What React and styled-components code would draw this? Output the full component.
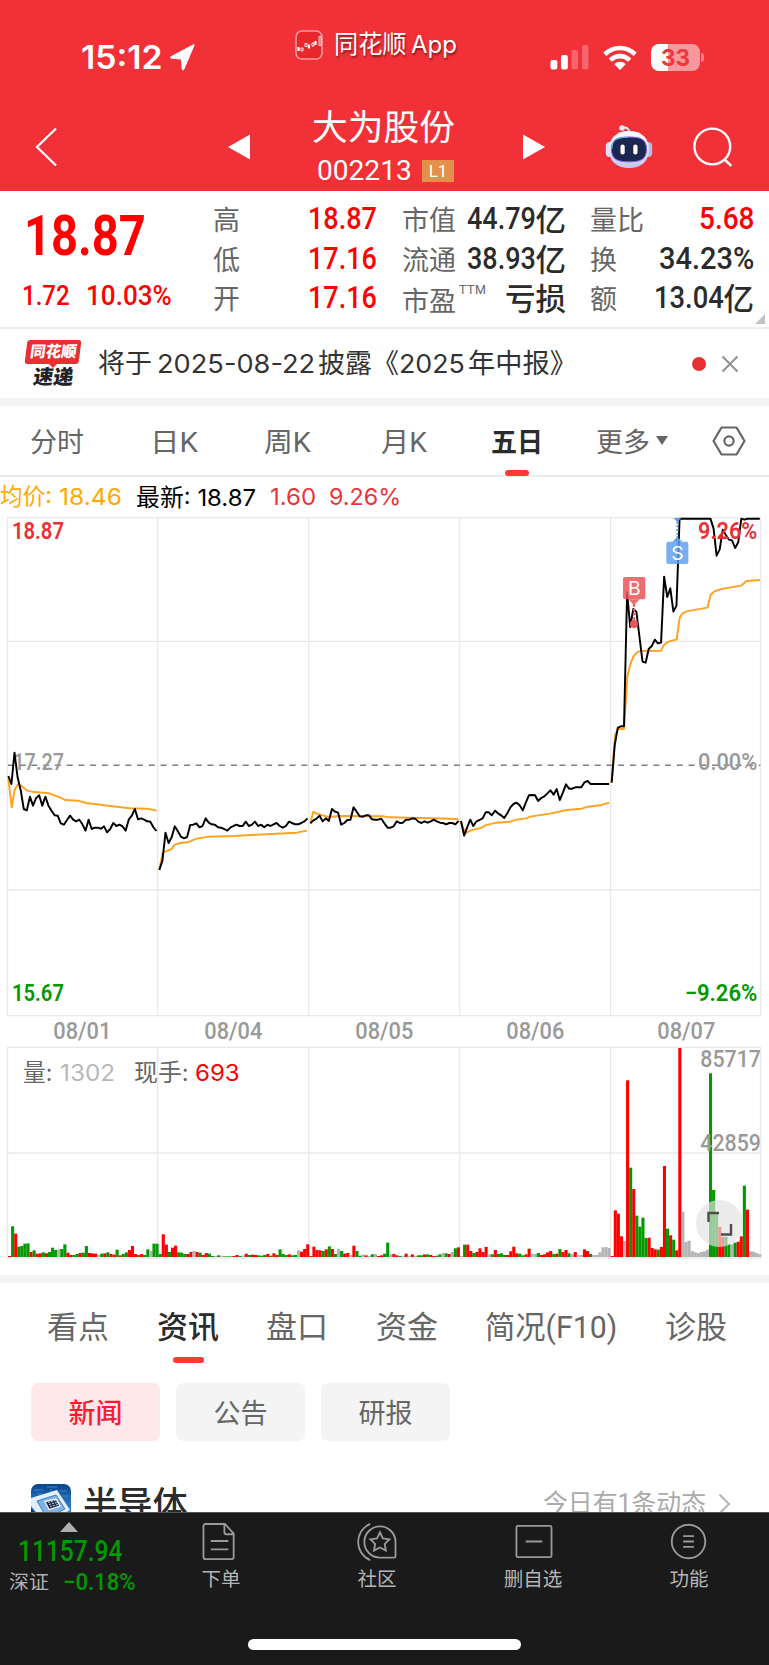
import { useLayoutEffect, useRef } from "react";
import styled, { createGlobalStyle } from "styled-components";

const GlobalStyle = createGlobalStyle`
  :root {
    --brand: #f23037;
    --up: #ff0000;
    --down: #009900;
    --text: #2b2b2b;
    --muted: #666;
    --line: #ececec;
    --strip: #f4f4f4;
  }

  * {
    box-sizing: border-box;
  }

  body {
    margin: 0;
    background: #fff;
    color: var(--text);
    font-family: Roboto, "Noto Sans CJK SC", sans-serif;
  }
`;

/* ---------- text fitted to a fixed width ---------- */

const StyledFit = styled.span`
  display: block;
  flex: none;
  width: ${({ $w }) => $w}px;
  margin-left: ${({ $ml }) => $ml || 0}px;
  font-size: ${({ $size }) => $size}px;
  font-weight: ${({ $weight }) => $weight || 400};
  font-family: ${({ $inter }) => ($inter ? 'Inter, "Noto Sans CJK SC", sans-serif' : "inherit")};
  color: ${({ $color }) => $color || "inherit"};
  white-space: pre;

  span {
    display: inline-block;
    transform-origin: left center;
  }
`;

function Fit({ w, ml, size, weight, color, inter, children }) {
  const ref = useRef(null);

  useLayoutEffect(() => {
    const el = ref.current;
    el.style.transform = `scaleX(${w / el.offsetWidth})`;
  }, [w]);

  return (
    <StyledFit $w={w} $ml={ml} $size={size} $weight={weight} $color={color} $inter={inter}>
      <span ref={ref}>{children}</span>
    </StyledFit>
  );
}

const Screen = styled.div`
  position: relative;
  width: 769px;
  height: 1665px;
  overflow: hidden;
  display: flex;
  flex-direction: column;
  background: #fff;
`;

const Strip = styled.div`
  flex: none;
  height: 8px;
  background: var(--strip);
`;

const Indicator = styled.i`
  position: absolute;
  left: 50%;
  bottom: ${({ $bottom }) => $bottom}px;
  width: ${({ $w }) => $w}px;
  height: 6px;
  margin-left: ${({ $w }) => -$w / 2}px;
  border-radius: 3px;
  background: #ff3b30;
`;

/* ---------- header ---------- */

const StyledHeader = styled.header`
  flex: none;
  height: 191px;
  background: var(--brand);
  color: #fff;
`;

const StatusBar = styled.div`
  height: 95px;
  padding: 20px 65px 0 81px;
  display: flex;
  align-items: center;
  line-height: 40px;

  > svg {
    flex: none;
  }
`;

const AppTag = styled.div`
  display: flex;
  align-items: center;
  margin: 0 93px 25px 99px;
  text-shadow: 1px 2px 2px rgba(0, 0, 0, 0.45);
`;

const Battery = styled.div`
  position: relative;
  width: 49px;
  height: 27px;
  margin-left: 14px;
  border-radius: 8px;
  background: linear-gradient(90deg, #fff 34%, #f9989c 34%);
  color: #f2363e;
  font: 700 22.5px/27px Inter, sans-serif;
  text-align: center;

  &::after {
    content: "";
    position: absolute;
    right: -4px;
    top: 9px;
    width: 3px;
    height: 9px;
    border-radius: 0 3px 3px 0;
    background: #f9868b;
  }
`;

const TitleBar = styled.div`
  height: 96px;
  display: flex;
  align-items: center;
  padding: 7px 34px 0 35px;

  > svg {
    flex: none;
  }
`;

const StockTitle = styled.div`
  width: 145px;
  height: 89px;
  margin: 0 66px 0 62px;
  padding-top: 8px;
  line-height: 36px;
`;

const StockCode = styled.div`
  display: flex;
  align-items: center;
  margin-top: 10px;
  padding-left: 5px;
  line-height: 30px;
`;

const Level = styled.b`
  width: 32px;
  height: 22px;
  margin-left: 10px;
  background: #e3914a;
  font-size: 17px;
  font-weight: 400;
  line-height: 22px;
  text-align: center;
`;

function Header() {
  return (
    <StyledHeader>
      <StatusBar>
        <Fit w={82} size={32.5} weight={600} inter>
          15:12
        </Fit>
        <svg width="26" height="27" viewBox="0 0 26 27" style={{ marginLeft: 7 }}>
          <path d="M24.4 1.8c.6-1.2-.3-1.9-1.400-1.300L1.100 12.200c-1.400.8-1.200 2.500.5 2.600l9.300.6 .8 9.600c.1 1.600 1.800 1.800 2.500.4z" fill="#fff" />
        </svg>
        <AppTag>
          <svg width="28" height="30" viewBox="0 0 28 30">
            <rect x="1" y="1" width="26" height="28" rx="6" fill="#e8262c" stroke="#f99a9d" strokeWidth="1.6" />
            <path d="M3.500 17v4M14 14.500v4M20.500 11v4" stroke="#fff" strokeWidth="2.200" />
            <path d="M6 18h2v3H6zM10 13.500h2v3h-2zM17 13h2v3h-2zM24 6.500h2v9h-2z" fill="none" stroke="#fff" strokeWidth=".9" />
          </svg>
          <Fit w={73} ml={11} size={24.5}>
            同花顺
          </Fit>
          <Fit w={46} ml={4} size={24} inter>
            App
          </Fit>
        </AppTag>
        <svg width="40" height="25" viewBox="0 0 40 25">
          <rect x="0.500" y="15" width="6.800" height="9.500" rx="2" fill="#fff" />
          <rect x="11" y="10" width="6.800" height="14.500" rx="2" fill="#fff" />
          <rect x="21.500" y="5" width="6.500" height="19.500" rx="2" fill="#f6656b" />
          <rect x="32" y="0" width="6.500" height="24.500" rx="2" fill="#f6656b" />
        </svg>
        <svg width="34" height="25" viewBox="0 0 34 25" style={{ marginLeft: 13 }}>
          <g fill="none" stroke="#fff" strokeWidth="4.600">
            <path d="M1.800 9.300C10.500.8 23.500.8 32.200 9.300" />
            <path d="M7.300 15.200C12.900 9.700 21.100 9.700 26.700 15.200" />
          </g>
          <path d="M11.300 19.200c3.300-3.200 8.100-3.200 11.400 0L17 25z" fill="#fff" />
        </svg>
        <Battery>33</Battery>
      </StatusBar>
      <TitleBar>
        <svg width="22" height="40" viewBox="0 0 22 40">
          <path d="M21 1.500 2 20l19 18.500" fill="none" stroke="#fff" strokeWidth="2.300" />
        </svg>
        <svg width="22" height="26" viewBox="0 0 22 26" style={{ marginLeft: 171 }}>
          <path d="M0 13 22 .5v25z" fill="#fff" />
        </svg>
        <StockTitle>
          <Fit w={143} size={35.5}>
            大为股份
          </Fit>
          <StockCode>
            <Fit w={95} size={27.5}>
              002213
            </Fit>
            <Level>L1</Level>
          </StockCode>
        </StockTitle>
        <svg width="22" height="26" viewBox="0 0 22 26">
          <path d="M22 13 0 .5v25z" fill="#fff" />
        </svg>
        <svg width="48" height="46" viewBox="0 0 48 46" style={{ marginLeft: 60 }}>
          <defs>
            <linearGradient id="shell" x1="0" y1="0" x2="0" y2="1">
              <stop offset="0" stopColor="#fff" />
              <stop offset="1" stopColor="#c3c6ec" />
            </linearGradient>
          </defs>
          <path d="M17 4c4-1.500 7 .5 7.300 4" fill="none" stroke="#e9e9fb" strokeWidth="2" />
          <circle cx="17" cy="4" r="2.800" fill="#e4e5fa" />
          <rect x=".8" y="18" width="8" height="15" rx="4" fill="#dfe1f8" />
          <rect x="39.200" y="18" width="8" height="15" rx="4" fill="#b9bbe6" />
          <path d="M24 7c13 0 20 7.500 20 18.500S37 44 24 44 4 36.500 4 25.500 11 7 24 7z" fill="url(#shell)" />
          <path d="M24 13c12 0 17.500 2.500 17.500 12.300S36 37.800 24 37.800 6.500 35 6.500 25.300 12 13 24 13z" fill="#1a2850" stroke="#7f5cf0" strokeWidth="1" />
          <path d="M7 24.500c0-9 5-11 16-11.200" fill="none" stroke="#48c3ef" strokeWidth="1" />
          <rect x="15.500" y="20.500" width="4.200" height="10" rx="2" fill="#fff" />
          <rect x="28.300" y="20.500" width="4.200" height="10" rx="2" fill="#fff" />
        </svg>
        <svg width="40" height="40" viewBox="0 0 40 40" style={{ marginLeft: 40 }}>
          <g fill="none" stroke="#fff" strokeWidth="2.400">
            <circle cx="19.300" cy="19.500" r="17.900" />
            <path d="m31.500 32.500 6.800 6.300" />
          </g>
        </svg>
      </TitleBar>
    </StyledHeader>
  );
}

/* ---------- quote ---------- */

const StyledQuote = styled.section`
  position: relative;
  flex: none;
  height: 138px;
  padding: 7px 0 0 22px;
  display: flex;
  border-bottom: 2px solid var(--line);
`;

const QuotePrice = styled.div`
  width: 191px;
  color: var(--up);

  > :first-child {
    height: 77px;
    line-height: 77px;
  }
`;

const QuoteChange = styled.div`
  display: flex;
  line-height: 42px;
`;

const QuoteColumn = styled.div`
  width: ${({ $w }) => $w}px;
  margin-right: ${({ $mr }) => $mr || 0}px;
`;

const QuoteRow = styled.div`
  display: flex;
  justify-content: space-between;
  height: 39.5px;
  line-height: 42px;
  color: ${({ $up }) => ($up ? "var(--up)" : "var(--text)")};
`;

const QuoteLabel = styled.span`
  color: var(--muted);
  font-size: 27px;
  white-space: nowrap;
  line-height: ${({ $low }) => ($low ? "51px" : "46px")};

  sup {
    display: inline-block;
    margin-left: 3px;
    font-size: 12.5px;
    letter-spacing: 0.5px;
    line-height: 1;
    vertical-align: 17px;
  }
`;

const QuoteValue = styled.span`
  display: flex;
  font-size: 30.5px;
  font-weight: 500;
`;

const QuoteUnit = styled.span`
  line-height: 45px;
`;

const Corner = styled.i`
  position: absolute;
  right: 4px;
  bottom: 3px;
  border: solid transparent;
  border-width: 0 0 10px 10px;
  border-bottom-color: #c4c4c4;
`;

const quotes = [
  { w: 164, mr: 25, rows: [["高", "18.87", 69, "", true], ["低", "17.16", 69, "", true], ["开", "17.16", 69, "", true]] },
  { w: 164, mr: 24, rows: [["市值", "44.79", 69, "亿"], ["流通", "38.93", 69, "亿"], ["市盈", "", 0, "亏损", false, "TTM"]] },
  { w: 164, rows: [["量比", "5.68", 55, "", true], ["换", "34.23%", 95, ""], ["额", "13.04", 70, "亿"]] },
];

function Quote() {
  return (
    <StyledQuote>
      <QuotePrice>
        <Fit w={122} ml={2} size={56} weight={700}>
          18.87
        </Fit>
        <QuoteChange>
          <Fit w={48} size={28.5} weight={500}>
            1.72
          </Fit>
          <Fit w={86} ml={16} size={28.5} weight={500}>
            10.03%
          </Fit>
        </QuoteChange>
      </QuotePrice>
      {quotes.map((col, i) => (
        <QuoteColumn key={i} $w={col.w} $mr={col.mr}>
          {col.rows.map(([label, value, w, unit, up, sup]) => (
            <QuoteRow key={label} $up={up}>
              <QuoteLabel $low={sup}>
                {label}
                {sup && <sup>{sup}</sup>}
              </QuoteLabel>
              <QuoteValue>
                {value && (
                  <Fit w={w} size={30.5} weight={500}>
                    {value}
                  </Fit>
                )}
                {unit && <QuoteUnit>{unit}</QuoteUnit>}
              </QuoteValue>
            </QuoteRow>
          ))}
        </QuoteColumn>
      ))}
      <Corner />
    </StyledQuote>
  );
}

/* ---------- news ticker ---------- */

const StyledTicker = styled.section`
  flex: none;
  height: 69px;
  padding-left: 25px;
  display: flex;
  align-items: center;
  line-height: 40px;
  color: #333;
`;

const TickerLogo = styled.div`
  position: relative;
  width: 57px;
  height: 47px;
  margin-right: 16px;
  text-align: center;
  font-weight: 900;
  color: #222;

  &::before {
    content: "";
    position: absolute;
    left: 1px;
    top: 0;
    width: 54px;
    height: 24px;
    border-radius: 3px;
    background: #ea2f31;
    transform: skewX(-7deg);
  }

  &::after {
    content: "";
    position: absolute;
    left: 23px;
    top: 23px;
    border: 5px solid transparent;
    border-top-color: #ea2f31;
    border-bottom: 0;
  }

  b,
  em {
    position: relative;
    display: block;
    transform: skewX(-8deg);
    font-style: normal;
  }

  b {
    color: #fff;
    font-size: 15.5px;
    line-height: 25px;
  }

  em {
    font-size: 20px;
    line-height: 24px;
  }
`;

const Dot = styled.i`
  width: 14px;
  height: 14px;
  margin-left: 115px;
  border-radius: 50%;
  background: #e93030;
`;

function Ticker() {
  return (
    <StyledTicker>
      <TickerLogo>
        <b>同花顺</b>
        <em>速递</em>
      </TickerLogo>
      <Fit w={54} size={27}>
        将于
      </Fit>
      <Fit w={158} ml={5} size={26} inter>
        2025-08-22
      </Fit>
      <Fit w={81} ml={3} size={27}>
        披露《
      </Fit>
      <Fit w={66} size={26} inter>
        2025
      </Fit>
      <Fit w={109} ml={3} size={27}>
        年中报》
      </Fit>
      <Dot />
      <svg width="18" height="18" viewBox="0 0 18 18" style={{ marginLeft: 15 }}>
        <path d="M1.500 1.500l15 15M16.500 1.500l-15 15" stroke="#959595" strokeWidth="2.200" />
      </svg>
    </StyledTicker>
  );
}

/* ---------- period tabs ---------- */

const StyledPeriods = styled.nav`
  flex: none;
  height: 71px;
  padding-left: 30px;
  display: flex;
  align-items: center;
  border-bottom: 2px solid var(--line);
  line-height: 64px;
  color: var(--muted);

  > svg {
    flex: none;
  }
`;

const Period = styled.div`
  position: relative;
  margin-left: ${({ $ml }) => $ml || 0}px;
  padding-top: ${({ $drop }) => $drop || 0}px;
  color: ${({ $active }) => ($active ? "var(--text)" : "inherit")};
`;

const periods = [
  ["分时", 54, 0],
  ["日K", 48, 66],
  ["周K", 47, 66],
  ["月K", 46, 70],
  ["五日", 52, 64],
  ["更多", 54, 53],
];

function Periods() {
  return (
    <StyledPeriods>
      {periods.map(([name, w, ml]) => (
        <Period key={name} $ml={ml} $drop={5} $active={name === "五日"}>
          <Fit w={w} size={27} weight={name === "五日" ? 700 : 400}>
            {name}
          </Fit>
          {name === "五日" && <Indicator $w={24} $bottom={-1} />}
        </Period>
      ))}
      <svg width="12" height="9" viewBox="0 0 12 9" style={{ marginLeft: 6 }}>
        <path d="M0 0h12L6 9z" fill="#666" />
      </svg>
      <svg width="34" height="30" viewBox="0 0 34 30" style={{ marginLeft: 44 }}>
        <g fill="none" stroke="#666" strokeWidth="2.200">
          <path d="M9.500 1.500h15L32.500 15l-8 13.500h-15L1.500 15z" strokeLinejoin="round" />
          <circle cx="17" cy="15" r="4.600" />
        </g>
      </svg>
    </StyledPeriods>
  );
}

const Legend = styled.div`
  flex: none;
  height: 40px;
  display: flex;
  line-height: 41px;
`;

/* ---------- chart, drawn in a 3x coordinate space ---------- */

const STEP = 9.26;
const MID = 745;
const FLOOR = 2220;

const days = [
  {
    start: 25,
    price: [168, 192, 98, 172, 210, 267, 271, 230, 257, 234, 226, 257, 230, 257, 272, 286, 287, 310, 314, 300, 287, 299, 304, 299, 313, 332, 299, 327, 323, 323, 326, 319, 337, 327, 309, 318, 314, 319, 332, 299, 287, 267, 298, 295, 299, 304, 305, 322, 333],
    avg: "25,175 35,262 44,210 54,193 62,196 80,211 95,215 130,218 147,220 180,232 195,240 235,242 258,249 330,258 390,265 440,266 470,272",
  },
  {
    start: 478,
    price: [450, 422, 338, 369, 352, 319, 334, 350, 355, 351, 315, 314, 310, 322, 318, 295, 308, 313, 314, 322, 323, 327, 332, 323, 318, 314, 318, 318, 305, 318, 314, 305, 318, 314, 322, 314, 318, 313, 309, 318, 323, 318, 305, 309, 313, 313, 309, 304, 295],
    avg: "478,448 488,398 497,394 515,387 524,374 540,369 563,367 575,362 590,356 610,353 625,350 700,348 830,341 890,338 921,332",
  },
  {
    start: 931,
    price: [310, 301, 296, 287, 304, 295, 303, 267, 275, 278, 314, 309, 300, 299, 262, 275, 289, 290, 286, 286, 298, 299, 299, 296, 310, 323, 323, 319, 304, 309, 308, 299, 299, 295, 296, 305, 309, 304, 308, 304, 299, 304, 308, 309, 313, 309, 309, 313, 303],
    avg: "931,308 940,275 950,281 985,291 1023,288 1150,289 1170,292 1375,297",
  },
  {
    start: 1383,
    price: [303, 347, 322, 299, 318, 304, 300, 295, 277, 277, 286, 272, 280, 286, 294, 280, 262, 252, 248, 256, 271, 248, 226, 225, 226, 243, 234, 229, 220, 211, 224, 207, 240, 218, 193, 206, 206, 202, 202, 202, 187, 183, 192, 192, 192, 192, 192, 192, 192],
    avg: "1382,303 1396,340 1410,332 1446,323 1455,316 1490,308 1530,305 1550,299 1580,295 1590,290 1650,281 1700,270 1745,266 1765,260 1800,256 1828,248",
  },
  {
    start: 1835,
    price: [188, 75, 23, 19, 19, -383, -279, -333, -325, -250, -175, -172, -213, -222, -241, -230, -232, -430, -369, -395, -325, -343, -604, -604, -604, -604, -604, -604, -604, -604, -604, -604, -604, -575, -493, -512, -571, -555, -541, -539, -516, -533, -604, -601, -604, -604, -604, -604, -604],
    avg: "1835,188 1845,45 1854,27 1872,27 1882,-130 1891,-167 1900,-190 1910,-202 1920,-207 1983,-208 1992,-225 2002,-233 2015,-238 2030,-241 2039,-307 2048,-320 2060,-326 2122,-337 2132,-375 2142,-385 2155,-390 2170,-394 2223,-403 2240,-417 2280,-420",
  },
];

// r = up, g = down, x = flat
const volumes = [
  "r3 g92 r70 g31 g33 g40 g41 r15 g20 r10 r11 g14 r11 g15 g28 g21 x23 g24 g38 r13 r6 g6 g9 r12 g13 g33 r12 r11 r10 x6 g10 r11 g14 r9 r7 g22 r5 g9 g14 r21 r33 r9 g6 r9 g6 g23 x18 g40 g40",
  "g9 r68 r37 g15 r28 r34 g14 g13 g9 r9 r15 x18 r15 g13 r6 r12 g10 g3 x3 g5 x4 g2 g2 g2 r3 r6 g3 x5 r10 g6 r7 r6 g5 g4 g6 r9 g4 r11 r6 g23 g9 g6 r8 g5 g6 x20 r16 r24 r38",
  "g3 r31 r21 r20 g18 r23 g32 r24 g9 x24 g18 r10 r12 x6 r34 g18 g4 x8 r5 x3 g8 x9 r3 r5 g10 g43 x8 r9 r5 g3 x4 r10 x3 r8 x4 g5 g5 r8 g8 r6 r3 g4 g8 x12 g11 r9 x15 g26 r29",
  "x3 g37 r37 r18 g12 r15 r26 r15 r30 x8 g8 r21 g9 g11 g6 r6 r17 r31 r11 g10 g5 r8 r25 x10 x9 g12 r6 r8 r14 r18 g9 r10 g24 r15 r21 g11 x8 r15 x6 x6 r23 r18 g9 x6 x6 x14 x29 x30 x27",
  "r3 r140 r130 r62 x48 r530 g268 r204 g124 g91 g118 g57 r58 r27 r23 g22 r30 r273 g85 r65 g52 r20 r627 x136 x45 x49 x18 x14 x12 x15 x17 x22 g551 g201 g130 r90 r60 g60 g38 x38 g43 r46 r62 g214 r142 x17 x16 x12 x8",
];

const barColors = { r: "#ff0000", g: "#009900", x: "#b4b4b4" };

const Label = styled.text`
  font-family: Roboto, sans-serif;
  font-size: 70px;
  font-weight: ${({ $weight }) => $weight || 500};
`;

const StyledChart = styled.section`
  position: relative;
  flex: none;
  height: 758px;

  svg {
    display: block;
  }
`;

const VolumeLegend = styled.div`
  position: absolute;
  left: 23px;
  top: 536px;
  display: flex;
  line-height: 40px;
  color: #666;
`;

const Fullscreen = styled.div`
  position: absolute;
  left: 696px;
  top: 683px;
  width: 47px;
  height: 47px;
  border-radius: 50%;
  background: rgba(227, 227, 227, 0.68);
`;

function AxisLabel({ x, y, w, color, weight, children }) {
  return (
    <Label x={x} y={y} textLength={w} lengthAdjust="spacingAndGlyphs" fill={color} $weight={weight}>
      {children}
    </Label>
  );
}

function Chart() {
  const columns = [473, 926, 1379, 1832];

  return (
    <StyledChart>
      <svg width="769" height="742" viewBox="0 0 2307 2226">
        <g fill="none" stroke="#e9e9e9" strokeWidth="4">
          <rect x="22.500" y="2" width="2259" height="1494" />
          <rect x="22.500" y="1591" width="2259" height="632" />
          <path d="M22 373H2281M22 1119H2281M22 1908H2281" />
          {columns.map((x) => (
            <path key={x} d={`M${x} 2V1496M${x} 1591V2222`} />
          ))}
        </g>
        <path d={`M24 ${MID}H2281`} stroke="#808080" strokeWidth="4.500" strokeDasharray="18 17.200" />

        {volumes.map((day, d) =>
          day.split(" ").map((bar, i) => {
            const h = Number(bar.slice(1));
            return (
              <rect
                key={`${d}-${i}`}
                x={24 + d * 452 + i * 9.22}
                y={FLOOR - h}
                width="9.3"
                height={h}
                fill={barColors[bar[0]]}
              />
            );
          })
        )}

        <AxisLabel x={40} y={760} w={152} color="#999">17.27</AxisLabel>
        <AxisLabel x={2094} y={760} w={178} color="#999">0.00%</AxisLabel>

        <g transform="translate(0 609)" fill="none" strokeWidth="5.800" strokeLinejoin="round">
          {days.map((day) => (
            <g key={day.start}>
              <polyline points={day.avg} stroke="#ffa21f" />
              <polyline
                points={day.price.map((y, i) => `${day.start + i * STEP},${y}`).join(" ")}
                stroke="#000"
              />
            </g>
          ))}
        </g>

        <AxisLabel x={36} y={67} w={156} color="#eb2f36" weight={600}>18.87</AxisLabel>
        <AxisLabel x={2094} y={67} w={178} color="#eb2f36" weight={600}>9.26%</AxisLabel>
        <AxisLabel x={36} y={1453} w={156} color="#009900" weight={600}>15.67</AxisLabel>
        <AxisLabel x={2054} y={1453} w={218} color="#009900" weight={600}>−9.26%</AxisLabel>
        {["01", "04", "05", "06", "07"].map((d, i) => (
          <AxisLabel key={d} x={160 + i * 453} y={1565} w={174} color="#999">{`08/${d}`}</AxisLabel>
        ))}
        <AxisLabel x={2101} y={1650} w={182} color="#999">85717</AxisLabel>
        <AxisLabel x={2101} y={1903} w={182} color="#999">42859</AxisLabel>

        <g fill="#ea545a">
          <rect x="1869" y="180" width="67" height="67" rx="6" opacity=".85" />
          <circle cx="1902" cy="321" r="12" />
          <path d="M1885 247h34l-17 18z" opacity=".85" />
          <path d="M1902 262v52" stroke="#ea545a" strokeWidth="7" strokeDasharray="7 6" />
        </g>
        <g fill="#5a9cf0">
          <rect x="1999" y="74" width="66" height="67" rx="6" opacity=".82" />
          <path d="M2020 3h24l-12 12zM2017 74l15-14 15 14z" />
          <path d="M2032 14v48" stroke="#5a9cf0" strokeWidth="6" strokeDasharray="6 5" />
        </g>
        <g fill="#fff" fontFamily="Inter, sans-serif" fontSize="58" textAnchor="middle">
          <text x="1903" y="234">B</text>
          <text x="2032" y="129">S</text>
        </g>
      </svg>
      <VolumeLegend>
        <Fit w={29} size={23.5} inter>
          量:
        </Fit>
        <Fit w={55} ml={8} size={23} color="#b8b8b8" inter>
          1302
        </Fit>
        <Fit w={55} ml={19} size={23.5} inter>
          现手:
        </Fit>
        <Fit w={45} ml={6} size={23} color="var(--up)" inter>
          693
        </Fit>
      </VolumeLegend>
      <Fullscreen>
        <svg width="47" height="47" viewBox="0 0 47 47">
          <path d="M12.500 22V13H23M25 34.500h10V24" fill="none" stroke="#4d4d4d" strokeWidth="2.400" />
        </svg>
      </Fullscreen>
    </StyledChart>
  );
}

/* ---------- information ---------- */

const StyledTopics = styled.nav`
  flex: none;
  height: 88px;
  padding-left: 47px;
  display: flex;
  line-height: 88px;
  color: #666;
`;

const Chips = styled.div`
  flex: none;
  display: flex;
  gap: 16px;
  padding: 12px 31px 0;
`;

const Chip = styled.div`
  width: 129px;
  height: 58px;
  border-radius: 7px;
  background: ${({ $active }) => ($active ? "#ffe8ea" : "#f4f4f4")};
  color: ${({ $active }) => ($active ? "#ff1a33" : "#666")};
  font-size: 27px;
  font-weight: ${({ $active }) => ($active ? 500 : 400)};
  line-height: 62px;
  text-align: center;
`;

const Sector = styled.div`
  flex: none;
  height: 40px;
  margin-top: 43px;
  padding: 0 37px 0 31px;
  display: flex;
  align-items: center;
  line-height: 40px;

  > svg {
    flex: none;
  }
`;

const topics = [
  ["看点", 62, 0],
  ["资讯", 62, 48],
  ["盘口", 62, 47],
  ["资金", 62, 48],
  ["简况(F10)", 132, 47],
  ["诊股", 62, 48],
];

function Info() {
  return (
    <>
      <StyledTopics>
        {topics.map(([name, w, ml]) => (
          <Period key={name} $ml={ml} $drop={1} $active={name === "资讯"}>
            <Fit w={w} size={31} weight={name === "资讯" ? 500 : 400}>
              {name}
            </Fit>
            {name === "资讯" && <Indicator $w={31} $bottom={8} />}
          </Period>
        ))}
      </StyledTopics>
      <Chips>
        <Chip $active>新闻</Chip>
        <Chip>公告</Chip>
        <Chip>研报</Chip>
      </Chips>
      <Sector>
        <svg width="40" height="40" viewBox="0 0 40 40">
          <defs>
            <linearGradient id="board" x1="0" y1="0" x2="0" y2="1">
              <stop offset="0" stopColor="#0d4389" />
              <stop offset=".6" stopColor="#2f80d0" />
            </linearGradient>
          </defs>
          <rect width="40" height="40" rx="7" fill="url(#board)" />
          <path d="M3 6h9M16 3h10M28 7h8M31 12h7M20 5v4M6 10h6" stroke="#3d86cf" />
          <path d="M0 14 26 6l13 20-24 14L0 22z" fill="#e3f0fc" />
          <path d="M6 17l19-6 9 14-18 9z" fill="#7fb2e6" stroke="#3d7cc4" />
          <path d="M14 17.500l11-2.500 4 7-11 3.500z" fill="#1b2740" stroke="#f2f8ff" strokeWidth="1.300" />
          <path d="M17 18.500l8-2M18 20.500l8-2M19 22.500l8-2" stroke="#c5d3e5" strokeDasharray="2 1" />
          <path d="M0 24l14 16H7a7 7 0 0 1-7-7z" fill="#0d3470" />
        </svg>
        <Fit w={105} ml={12} size={34.5} weight={500}>
          半导体
        </Fit>
        <Fit w={163} ml={355} size={25} color="#aaa">
          今日有1条动态
        </Fit>
        <svg width="13" height="22" viewBox="0 0 13 22" style={{ marginLeft: 12 }}>
          <path d="M1.500 1.500 11 11l-9.500 9.500" fill="none" stroke="#b5b5b5" strokeWidth="2" />
        </svg>
      </Sector>
    </>
  );
}

/* ---------- bottom bar ---------- */

const StyledBottomBar = styled.footer`
  position: absolute;
  left: 0;
  bottom: 0;
  width: 100%;
  height: 153px;
  display: flex;
  background: #1a1a1a;
  border-top: 1px solid #555;
  color: #b5b5b5;
`;

const MarketIndex = styled.div`
  width: 143px;
  padding: 9px 0 0 9px;
  color: var(--down);

  > svg {
    display: block;
    margin-left: 51px;
  }

  > span {
    margin-left: 9px;
    line-height: 39px;
  }

  > div {
    display: flex;
    line-height: 22px;
    margin-top: 1px;
  }
`;

const Action = styled.div`
  width: 156px;
  padding-top: 10px;
  display: flex;
  flex-direction: column;
  align-items: center;
  font-size: 19.5px;
  line-height: 20px;

  svg {
    margin-bottom: 9px;
    fill: none;
    stroke: #999;
    stroke-width: 1.9;
  }
`;

const HomeBar = styled.i`
  position: absolute;
  left: 248px;
  bottom: 15px;
  width: 273px;
  height: 11px;
  border-radius: 6px;
  background: #fff;
`;

const actions = [
  ["下单", <path key="p" d="M3.500 1h20l9 10v24a2 2 0 0 1-2 2h-27a2 2 0 0 1-2-2V3a2 2 0 0 1 2-2zM23 1v8.500a2 2 0 0 0 2 2h7.500M9 18.500h18M9 27h18" />],
  ["社区", <path key="p" d="M12.500 1C-4 8-4 31 12.500 38M22.500 3.500A16 16 0 0 0 22.500 35.500H37a1.500 1.500 0 0 0 1.500-1.500V19.500A16 16 0 0 0 22.500 3.500zM22.500 9.500l3 6.200 6.800 1-4.900 4.800 1.200 6.800-6.100-3.200-6.100 3.200 1.200-6.800-4.900-4.800 6.800-1z" />],
  ["删自选", <path key="p" d="M4 3h33a1.500 1.500 0 0 1 1.500 1.500v29A1.500 1.500 0 0 1 37 35H4a1.500 1.500 0 0 1-1.500-1.500v-29A1.500 1.500 0 0 1 4 3zM12 19h17" />],
  ["功能", <path key="p" d="M19 1.800a17.200 17.200 0 1 0 0 34.400a17.200 17.200 0 1 0 0-34.400zM13.500 13.500h11M13.500 19h11M13.500 24.500h11" />],
];

function BottomBar() {
  return (
    <StyledBottomBar>
      <MarketIndex>
        <svg width="18" height="10" viewBox="0 0 18 10">
          <path d="M9 0l9 10H0z" fill="#b0b0b0" />
        </svg>
        <Fit w={104} ml={9} size={29} weight={500}>
          11157.94
        </Fit>
        <div>
          <Fit w={40} size={19.5} color="#b0b0b0">
            深证
          </Fit>
          <Fit w={72} ml={14} size={23} weight={500}>
            −0.18%
          </Fit>
        </div>
      </MarketIndex>
      {actions.map(([name, icon]) => (
        <Action key={name}>
          <svg width="40" height="38" viewBox="-1 0 41 39">
            {icon}
          </svg>
          {name}
        </Action>
      ))}
      <HomeBar />
    </StyledBottomBar>
  );
}

export default function App() {
  return (
    <>
      <GlobalStyle />
      <Screen>
        <Header />
        <Quote />
        <Ticker />
        <Strip />
        <Periods />
        <Legend>
          <Fit w={45} size={23.5} color="#ffa800">
            均价
          </Fit>
          <Fit w={77} size={23} color="#ffa800" inter>
            {": 18.46"}
          </Fit>
          <Fit w={120} ml={14} size={23.3} color="#000" inter>
            最新: 18.87
          </Fit>
          <Fit w={46} ml={14} size={23} color="#eb333b" inter>
            1.60
          </Fit>
          <Fit w={72} ml={13} size={23} color="#eb333b" inter>
            9.26%
          </Fit>
        </Legend>
        <Chart />
        <Strip />
        <Info />
        <BottomBar />
      </Screen>
    </>
  );
}
